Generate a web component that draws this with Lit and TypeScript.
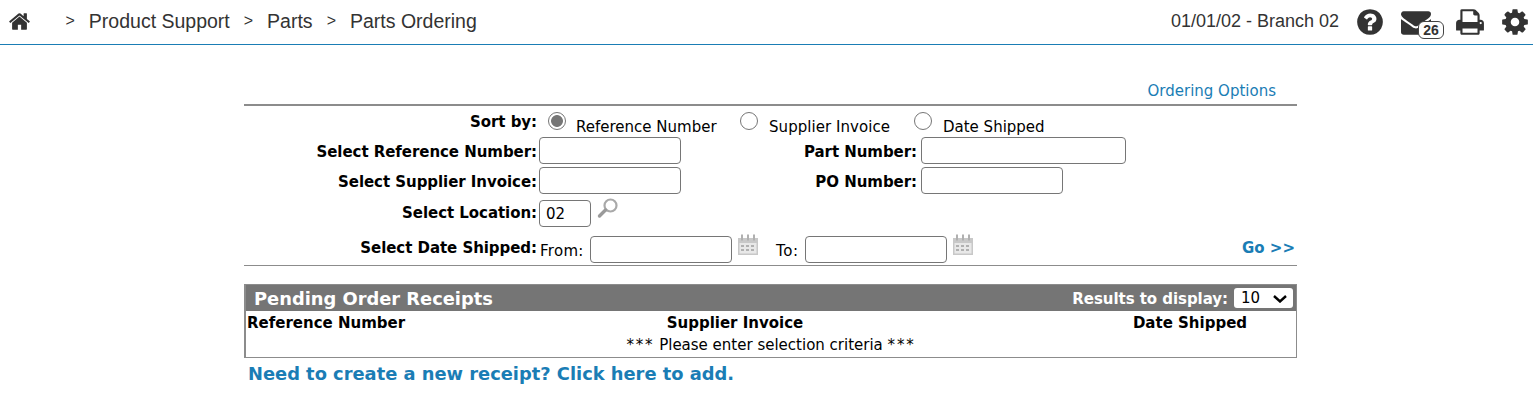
import { LitElement, html, css, svg } from "lit";
import { customElement } from "lit/decorators.js";

const HOME = "M1472 992v480q0 26-19 45t-45 19h-384v-384h-256v384h-384q-26 0-45-19t-19-45v-480q0-1 .5-3t.5-3l575-474 575 474q1 2 1 6zm223-69l-62 74q-8 9-21 11h-3q-13 0-21-7l-692-577-692 577q-12 8-24 7-13-2-21-11l-62-74q-8-10-7-23.5t11-21.5l719-599q32-26 76-26t76 26l244 204v-195q0-14 9-23t23-9h192q14 0 23 9t9 23v408l219 182q10 8 11 21.5t-7 23.5z";
const HELP = "M1024 1376v-192q0-14-9-23t-23-9h-192q-14 0-23 9t-9 23v192q0 14 9 23t23 9h192q14 0 23-9t9-23zm256-672q0-88-55.5-163t-138.5-116-170-41q-243 0-371 213-15 24 8 42l132 100q7 6 19 6 16 0 25-12 53-68 86-92 34-24 86-24 48 0 85.5 26t37.5 59q0 38-20 61t-68 45q-63 28-115.5 86.5t-52.5 125.5v36q0 14 9 23t23 9h192q14 0 23-9t9-23q0-19 21.5-49.5t54.5-49.5q32-18 49-28.5t46-35 44.5-48 28-60.5 12.5-81zm384 192q0 209-103 385.5t-279.5 279.5-385.5 103-385.5-103-279.5-279.5-103-385.5 103-385.5 279.5-279.5 385.5-103 385.5 103 279.5 279.5 103 385.5z";
const MAIL = "M1792 710v794q0 66-47 113t-113 47h-1472q-66 0-113-47t-47-113v-794q44 49 101 87 362 246 497 345 57 42 92.5 65.5t94.5 48 110 24.5h2q51 0 110-24.5t94.5-48 92.5-65.5q170-123 498-345 57-39 100-87zm0-294q0 79-49 151t-122 123q-376 261-468 325-10 7-42.5 30.5t-54 38-52 32.5-57.5 27-50 9h-2q-23 0-50-9t-57.5-27-52-32.5-54-38-42.5-30.5q-91-64-262-182.5t-205-142.5q-62-42-117-115.5t-55-136.5q0-78 41.5-130t118.5-52h1472q65 0 112.5 47t47.5 113z";
const PRINT = "M448 1536h896v-256h-896v256zm0-640h896v-384h-160q-40 0-68-28t-28-68v-160h-640v640zm1152 64q0-26-19-45t-45-19-45 19-19 45 19 45 45 19 45-19 19-45zm128 0v416q0 13-9.5 22.5t-22.5 9.5h-224v160q0 40-28 68t-68 28h-960q-40 0-68-28t-28-68v-160h-224q-13 0-22.5-9.5t-9.5-22.5v-416q0-79 56.5-135.5t135.5-56.5h64v-544q0-40 28-68t68-28h672q40 0 88 20t76 48l152 152q28 28 48 76t20 88v256h64q79 0 135.5 56.5t56.5 135.5z";
const COG = "M1152 896q0-106-75-181t-181-75-181 75-75 181 75 181 181 75 181-75 75-181zm512-109v222q0 12-8 23t-20 13l-185 28q-19 54-39 91 35 50 107 138 10 12 10 25t-9 23q-27 37-99 108t-94 71q-12 0-26-9l-138-108q-44 23-91 38-16 136-29 186-7 28-36 28h-222q-14 0-24.5-8.5t-11.5-21.5l-28-184q-49-16-90-37l-141 107q-10 9-25 9-14 0-25-11-126-114-165-168-7-10-7-23 0-12 8-23 15-21 51-66.5t54-70.5q-27-50-41-99l-183-27q-13-2-21-12.5t-8-23.5v-222q0-12 8-23t19-13l186-28q14-46 39-92-40-57-107-138-10-12-10-24 0-10 9-23 26-36 98.5-107.5t94.5-71.5q13 0 26 10l138 107q44-23 91-38 16-136 29-186 7-28 36-28h222q14 0 24.5 8.5t11.5 21.5l28 184q49 16 90 37l142-107q9-9 24-9 13 0 25 10 129 119 165 170 7 8 7 22 0 12-8 23-15 21-51 66.5t-54 70.5q26 50 41 98l183 28q13 2 21 12.5t8 23.5z";

const fa = (d: string, size: number, cls = "") => html`<svg class="fa ${cls}" width=${size} height=${size} viewBox="0 0 1792 1792">${svg`<path d=${d}></path>`}</svg>`;

const calendar = () => html`<svg class="cal" width="22" height="22" viewBox="0 0 22 22">${svg`
  <rect x="1" y="4" width="20" height="17" fill="#c8c8c8"></rect>
  <rect x="2.5" y="9" width="17" height="10.5" fill="#e8e8e8"></rect>
  <g fill="#b0b0b0">
    <rect x="4" y="0.5" width="2" height="6"></rect><rect x="10" y="0.5" width="2" height="6"></rect><rect x="16" y="0.5" width="2" height="6"></rect>
    <rect x="4" y="11" width="3" height="2"></rect><rect x="9" y="11" width="3" height="2"></rect><rect x="14" y="11" width="3" height="2"></rect>
    <rect x="4" y="15" width="3" height="2"></rect><rect x="9" y="15" width="3" height="2"></rect><rect x="14" y="15" width="3" height="2"></rect>
  </g>`}</svg>`;

const magnifier = () => html`<svg class="mag" width="22" height="21" viewBox="0 0 22 21">${svg`
  <circle cx="13.5" cy="7.5" r="6" fill="#fff" stroke="#a9a9a9" stroke-width="2.2"></circle>
  <path d="M8.5 12 L2.5 18" stroke="#9a9a9a" stroke-width="3.4" stroke-linecap="round"></path>`}</svg>`;

@customElement("app-root")
export class AppRoot extends LitElement {
  static styles = css`
    :host { display: block; font-family: "DejaVu Sans", Verdana, sans-serif; font-size: 15px; color: #000; background: #fff; height: 420px; overflow: hidden; }
    * { box-sizing: border-box; }
    .top { height: 45px; border-bottom: 1px solid #1a7db5; display: flex; align-items: center; font-family: "Liberation Sans", Arial, sans-serif; color: #333; }
    .fa { fill: #333; display: block; flex: none; }
    .crumbs { display: flex; align-items: center; gap: 14px; font-size: 19.5px; padding-left: 8px; padding-bottom: 2px; }
    .home { margin-right: 20.5px; margin-top: 1px; }
    .sep { font-size: 16px; }
    .right { margin-left: auto; display: flex; align-items: center; padding-right: 3px; }
    .date { font-size: 18px; margin-right: 16px; padding-bottom: 2px; }
    .mail { position: relative; margin: 0 24px 0 16px; }
    .badge { position: absolute; left: 17px; top: 14px; width: 26px; height: 18px; background: #fff; border: 1px solid #444; border-radius: 6px; font-size: 14px; font-weight: 700; line-height: 17px; text-align: center; color: #333; }
    .print { margin-right: 15px; }
    .main { margin-left: 244px; width: 1053px; }
    .options { height: 59px; display: flex; justify-content: flex-end; padding: 36px 21px 0 0; line-height: 20px; color: #1a7db5; }
    .rule1 { height: 2px; background: #8c8c8c; }
    .row { display: flex; align-items: flex-start; }
    .lbl { width: 293px; text-align: right; font-weight: 700; flex: none; line-height: 20px; letter-spacing: -0.05px; white-space: nowrap; }
    .sort { height: 31px; }
    .sort .lbl { margin-top: 6px; }
    .radio { appearance: none; -webkit-appearance: none; width: 18px; height: 18px; margin: 0; border: 1.5px solid #767676; border-radius: 50%; background: #fff; flex: none; display: block; }
    .radio:checked { background: radial-gradient(circle, #767676 0 5.5px, #fff 6.3px); }
    .opt { display: flex; line-height: 20px; }
    .opt span { margin-top: 5px; margin-left: 10px; }
    .o1 { margin-left: 11px; margin-top: 6px; width: 192px; }
    .o2 { margin-top: 6px; width: 174px; }
    .o2 span { margin-left: 11px; letter-spacing: 0.05px; }
    .o3 { margin-top: 6px; }
    .o3 span { margin-left: 11px; }
    .in { height: 27px; border: 1px solid #767676; border-radius: 4px; background: #fff; padding: 1px 6px; font: 15px "DejaVu Sans", Verdana, sans-serif; color: #000; display: block; margin-left: 2px; flex: none; }
    .w142 { width: 142px; }
    .w205 { width: 205px; }
    .w52 { width: 52px; }
    .l2 { width: 236px; text-align: right; font-weight: 700; flex: none; line-height: 20px; margin-right: 2px; margin-top: 5px; letter-spacing: -0.05px; }
    .r-in .lbl { margin-top: 5px; }
    .r-in.loc .lbl { margin-top: 3px; }
    .gap3 { margin-top: 3px; }
    .gap6 { margin-top: 6px; }
    .gap9 { margin-top: 9px; }
    .mag { display: block; margin: -2px 0 0 6px; }
    .from { margin-left: 3px; margin-top: 5px; line-height: 20px; width: 48px; flex: none; letter-spacing: 0.3px; }
    .to { margin-left: 17px; margin-top: 5px; line-height: 20px; width: 29px; flex: none; letter-spacing: 0.6px; }
    .nomargin { margin-left: 0; }
    .cal { display: block; margin: -2px 0 0 5px; flex: none; }
    .go { margin-left: auto; margin-right: 2px; font-weight: 700; color: #1a7db5; line-height: 20px; margin-top: 2px; }
    .date-row .lbl { margin-top: 2px; }
    .date-row .from { margin-right: 2px; }
    .rule2 { height: 1px; background: #8c8c8c; margin-top: 2px; }
    .grid { margin-top: 18px; border: 1px solid #8c8c8c; border-left-width: 2px; height: 74px; }
    .bar { height: 26px; background: #757575; color: #fff; display: flex; align-items: center; padding: 0 3px 0 8px; font-weight: 700; }
    .title { font-size: 17.85px; }
    .res { margin-left: auto; margin-right: 6px; letter-spacing: -0.05px; padding-top: 1px; }
    select { appearance: none; -webkit-appearance: none; width: 59px; height: 20px; border: none; border-radius: 3px; font: 15px "DejaVu Sans", Verdana, sans-serif; padding-left: 7px; color: #000;
      background: #fff url("data:image/svg+xml,%3Csvg xmlns='http://www.w3.org/2000/svg' width='14' height='8'%3E%3Cpath d='M1 1l6 5.5L13 1' fill='none' stroke='%23000' stroke-width='2.4'/%3E%3C/svg%3E") no-repeat 39px 7px; }
    .cols { display: grid; grid-template-columns: 139px 700px 210px; font-weight: 700; line-height: 20px; padding-top: 2px; }
    .cols div { text-align: center; }
    .cols div:first-child { text-align: left; padding-left: 1px; white-space: nowrap; }
    .msg { text-align: center; line-height: 20px; margin-top: 2px; }
    .stars { letter-spacing: 1.8px; }
    .add { font-size: 17.85px; font-weight: 700; color: #1a7db5; padding-left: 4px; margin-top: 5px; line-height: 22px; }
  `;

  render() {
    return html`
      <div class="top">
        <div class="crumbs">
          ${fa(HOME, 23, "home")}
          <span class="sep">&gt;</span><span>Product Support</span>
          <span class="sep">&gt;</span><span>Parts</span>
          <span class="sep">&gt;</span><span>Parts Ordering</span>
        </div>
        <div class="right">
          <span class="date">01/01/02 - Branch 02</span>
          ${fa(HELP, 30)}
          <div class="mail">${fa(MAIL, 30)}<span class="badge">26</span></div>
          ${fa(PRINT, 30, "print")}
          ${fa(COG, 30)}
        </div>
      </div>
      <div class="main">
        <div class="options">Ordering Options</div>
        <div class="rule1"></div>
        <div class="row sort">
          <div class="lbl">Sort by:</div>
          <label class="opt o1"><input class="radio" type="radio" name="s" checked /><span>Reference Number</span></label>
          <label class="opt o2"><input class="radio" type="radio" name="s" /><span>Supplier Invoice</span></label>
          <label class="opt o3"><input class="radio" type="radio" name="s" /><span>Date Shipped</span></label>
        </div>
        <div class="row r-in">
          <div class="lbl">Select Reference Number:</div><input class="in w142" />
          <div class="l2">Part Number:</div><input class="in w205" />
        </div>
        <div class="row r-in gap3">
          <div class="lbl">Select Supplier Invoice:</div><input class="in w142" />
          <div class="l2">PO Number:</div><input class="in w142" />
        </div>
        <div class="row r-in loc gap6">
          <div class="lbl">Select Location:</div><input class="in w52" value="02" />${magnifier()}
        </div>
        <div class="row date-row gap9">
          <div class="lbl">Select Date Shipped:</div>
          <span class="from">From:</span><input class="in w142 nomargin" />${calendar()}
          <span class="to">To:</span><input class="in w142 nomargin" />${calendar()}
          <span class="go">Go &gt;&gt;</span>
        </div>
        <div class="rule2"></div>
        <div class="grid">
          <div class="bar"><span class="title">Pending Order Receipts</span><span class="res">Results to display:</span><select><option>10</option></select></div>
          <div class="cols"><div>Reference Number</div><div>Supplier Invoice</div><div>Date Shipped</div></div>
          <div class="msg"><span class="stars">***</span> Please enter selection criteria <span class="stars">***</span></div>
        </div>
        <div class="add">Need to create a new receipt? Click here to add.</div>
      </div>
    `;
  }
}
